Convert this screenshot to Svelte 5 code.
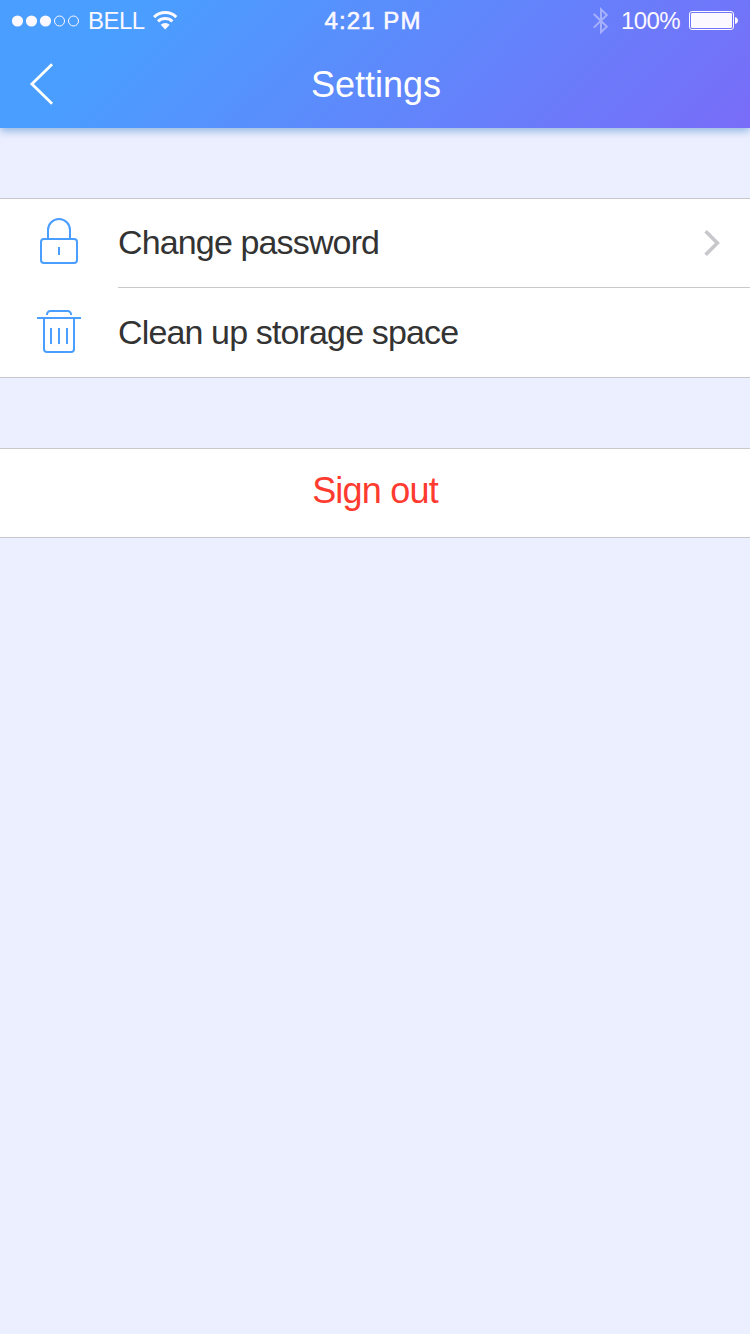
<script>
  const rows = [
    { icon: 'lock', label: 'Change password', chevron: true },
    { icon: 'trash', label: 'Clean up storage space', chevron: false }
  ];
</script>

<div class="screen">
  <header>
    <div class="status">
      <div class="carrier">
        <svg class="dots" width="68" height="12" viewBox="0 0 68 12" fill="#fcf8ff">
          <circle cx="5.5" cy="6" r="5.6" />
          <circle cx="19.5" cy="6" r="5.6" />
          <circle cx="33.5" cy="6" r="5.6" />
          <circle cx="47.5" cy="6" r="5" fill="none" stroke="#fcf8ff" />
          <circle cx="61.5" cy="6" r="5" fill="none" stroke="#fcf8ff" />
        </svg>
        <span class="bell">BELL</span>
        <svg class="wifi" width="25" height="19" viewBox="0 0 25 19">
          <path d="M1.1 6.1a16 16 0 0 1 22.2 0M5 10.4a10.6 10.6 0 0 1 14.4 0" fill="none" stroke="#fcf8ff" stroke-width="3" />
          <path d="M12.2 18.6l-4.5-4.8a6.5 6.5 0 0 1 9 0z" fill="#fcf8ff" />
        </svg>
      </div>
      <span class="time">4:21 PM</span>
      <div class="power">
        <svg class="bluetooth" width="16" height="28" viewBox="0 0 16 28">
          <path d="M.8 7L13.8 19.6L8 25.2V2.4L13.8 8L.8 20.6" fill="none" stroke="#fcf8ff" stroke-opacity=".42" stroke-width="2" />
        </svg>
        <span class="percent">100%</span>
        <svg class="battery" width="50" height="20" viewBox="0 0 50 20">
          <rect x=".5" y=".5" width="44" height="18" rx="2.5" fill="none" stroke="#fcf8ff" />
          <rect x="2" y="2" width="41" height="15" rx="1.2" fill="#fcf8ff" />
          <path d="M46 6c4 1 4 6 0 7z" fill="#fcf8ff" />
        </svg>
      </div>
    </div>
    <div class="navbar">
      <svg class="back" width="26" height="42" viewBox="0 0 26 42">
        <path d="M23.1 1.2L2.9 21l20.2 19.8" fill="none" stroke="#fff" stroke-width="2.8" />
      </svg>
      <h1>Settings</h1>
    </div>
  </header>

  <main>
    <section class="group">
      {#each rows as row}
        <div class="row">
          <div class="icon">
            <svg width="46" height="50" viewBox="0 0 46 50" fill="none" stroke="#4a9eff" stroke-width="2">
              {#if row.icon === 'lock'}
                <rect x="5" y="23" width="36" height="24" rx="3" />
                <path d="M12 23v-9a11 11 0 0 1 22 0v9M23 31v8" />
              {:else}
                <path d="M1 12h44M8 12v31a3 3 0 0 0 3 3h24a3 3 0 0 0 3-3V12M11 9v-.5a3.5 3.5 0 0 1 3.5-3.5h17a3.5 3.5 0 0 1 3.5 3.5V9M15 22v16M23 22v16M31 22v16" />
              {/if}
            </svg>
          </div>
          <div class="content">
            <span class="label">{row.label}</span>
            {#if row.chevron}
              <svg width="18" height="28" viewBox="0 0 18 28">
                <path d="M2.6 2.2L14.4 14L2.6 25.8" fill="none" stroke="#c7c7cc" stroke-width="3.6" />
              </svg>
            {/if}
          </div>
        </div>
      {/each}
    </section>
    <section class="group">
      <button>Sign out</button>
    </section>
  </main>
</div>

<style>
  :global(body) {
    margin: 0;
    background: #ecefff;
  }
  .screen {
    width: 750px;
    min-height: 1334px;
    background: #ecefff;
    font-family: "Liberation Sans", Arial, sans-serif;
  }
  header {
    height: 128px;
    background: linear-gradient(135deg, #4a9eff 18%, #796cf8 100%);
    box-shadow: 0 3px 8px rgba(66, 133, 200, 0.55);
  }
  .status {
    height: 40px;
    display: grid;
    grid-template-columns: 1fr auto 1fr;
    color: #fcf8ff;
    font-size: 24px;
    line-height: 41px;
  }
  .carrier,
  .power {
    display: flex;
    align-items: center;
  }
  .carrier {
    padding-left: 12px;
  }
  .bell {
    margin-left: 8px;
    letter-spacing: -0.5px;
  }
  .wifi {
    margin-left: 8px;
    margin-bottom: 1px;
  }
  .time {
    letter-spacing: 1.1px;
    margin-right: 4px;
    -webkit-text-stroke: 0.6px #fcf8ff;
  }
  .power {
    justify-content: flex-end;
    padding-right: 11px;
  }
  .bluetooth {
    margin-right: 12px;
  }
  .percent {
    letter-spacing: -0.6px;
    margin-right: 9px;
  }
  .navbar {
    height: 88px;
    display: grid;
    grid-template-columns: 101px 1fr 99px;
    align-items: center;
  }
  .back {
    margin-left: 29px;
  }
  h1 {
    margin: 0;
    padding-top: 2px;
    color: #fff;
    font-size: 36px;
    font-weight: 400;
    line-height: 86px;
    text-align: center;
  }
  main {
    padding-top: 70px;
    display: flex;
    flex-direction: column;
    gap: 70px;
  }
  .group {
    background: #fff;
    border-top: 1px solid #c8c7cc;
    border-bottom: 1px solid #c8c7cc;
  }
  .row {
    display: flex;
    height: 89px;
  }
  .icon {
    width: 118px;
    box-sizing: border-box;
    padding-top: 18px;
    display: flex;
    align-items: flex-start;
    justify-content: center;
    flex: none;
  }
  .content {
    flex: 1;
    display: flex;
    align-items: center;
    justify-content: space-between;
    padding-right: 29px;
    color: #333;
    font-size: 34px;
    letter-spacing: -0.86px;
  }
  .label {
    line-height: 86px;
    padding-bottom: 2px;
  }
  .row:first-child .icon {
    padding-top: 17px;
  }
  .row:first-child .content {
    border-bottom: 1px solid #c8c7cc;
  }
  button {
    display: block;
    width: 100%;
    height: 88px;
    border: 0;
    padding: 0 0 5px;
    background: none;
    color: #ff3b30;
    font-family: inherit;
    font-size: 36px;
    letter-spacing: -0.8px;
  }
</style>
